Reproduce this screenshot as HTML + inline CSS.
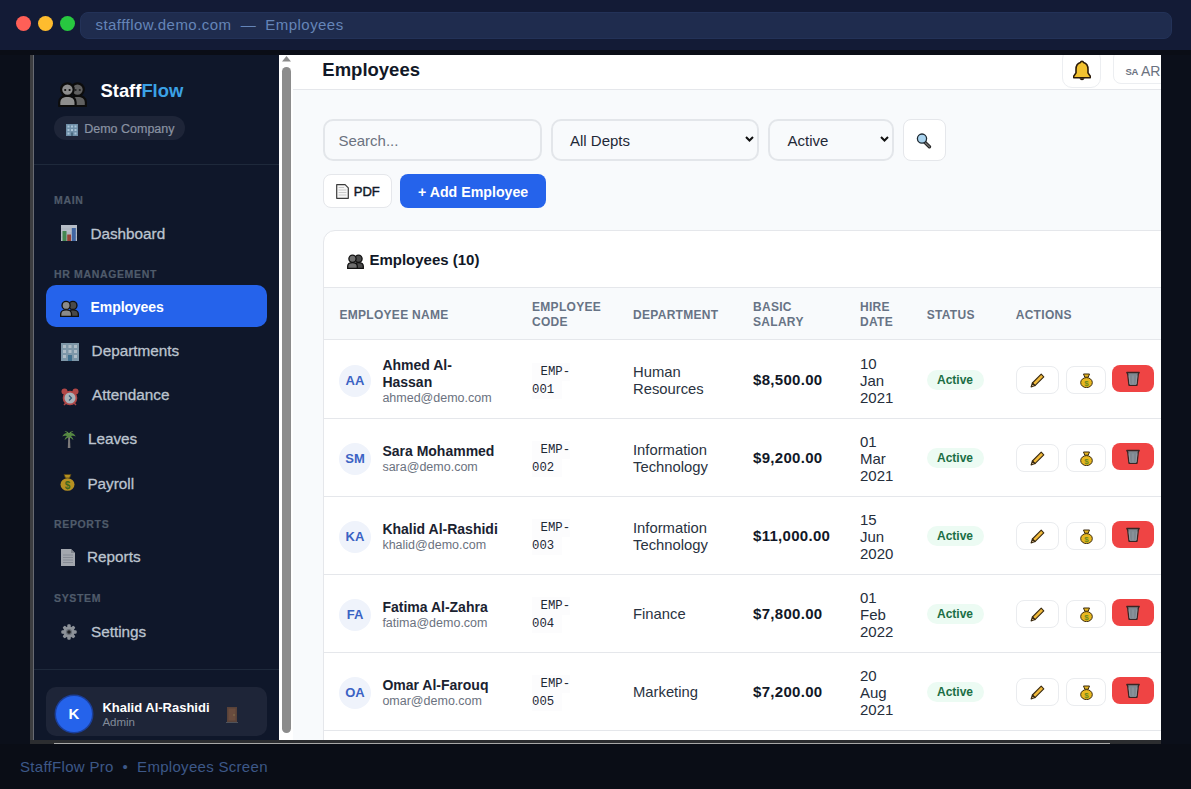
<!DOCTYPE html>
<html><head><meta charset="utf-8">
<style>
*{box-sizing:border-box;margin:0;padding:0}
html,body{width:1191px;height:789px;overflow:hidden;background:#0a0d16;font-family:"Liberation Sans",sans-serif}
.a{position:absolute}
.t{position:absolute;white-space:nowrap;line-height:20px;height:20px}
svg{display:block;position:absolute}
#top{left:0;top:0;width:1191px;height:50px;background:#131b36}
.dot{position:absolute;top:16px;width:15px;height:15px;border-radius:50%}
#url{left:80px;top:12px;width:1092px;height:27px;border-radius:8px;background:#1f2c4e;border:1px solid #233258}
#lft{left:0;top:55px;width:30px;height:689px;background:#0b0f1a}
#vbar{left:30px;top:55px;width:4px;height:685px;background:#3c3d40}
#vbar2{left:32.5px;top:55px;width:1.5px;height:685px;background:#676a72}
#side{left:34px;top:55px;width:245px;height:685px;background:#0f172a;overflow:hidden}
#sb{left:279px;top:55px;width:14px;height:685px;background:#fff}
#main{left:293px;top:55px;width:868px;height:685px;background:#f8fafc;overflow:hidden}
#rgt{left:1161px;top:55px;width:30px;height:689px;background:#0b0f1a}
#hbar{left:30px;top:740px;width:1131px;height:4px;background:#2c2d30}
#foot{left:0;top:744px;width:1191px;height:45px;background:#0a0d16}
.lbl{position:absolute;left:20px;font-size:10.5px;font-weight:700;letter-spacing:0.65px;color:#4f5b6b;-webkit-text-stroke:0.2px #4f5b6b;line-height:14px;height:14px}
.nav{position:absolute;font-size:15.3px;color:#bcc4cf;-webkit-text-stroke:0.3px #bcc4cf;line-height:20px;height:20px;white-space:nowrap}
</style></head>
<body>
<div id="top" class="a">
  <div class="dot" style="left:16px;background:#ff5f57"></div>
  <div class="dot" style="left:38px;background:#febc2e"></div>
  <div class="dot" style="left:60px;background:#28c840"></div>
  <div id="url" class="a"></div>
  <div class="t" style="left:95.5px;top:15px;font-size:15px;letter-spacing:0.45px;color:#6585b8">staffflow.demo.com&nbsp;&nbsp;—&nbsp;&nbsp;Employees</div>
</div>
<div id="lft" class="a"></div>
<div id="vbar" class="a"></div>
<div id="vbar2" class="a"></div>
<div id="side" class="a">
  <!-- logo -->
  <svg style="left:23.5px;top:25.5px" width="29" height="26" viewBox="0 0 29 26">
    <path d="M11.5 25v-3.8c0-4 3.6-6.6 8.2-6.6s8.2 2.6 8.2 6.6V25z" fill="#606060" stroke="#0c0c0c" stroke-width="2.2" stroke-linejoin="round"/>
    <circle cx="19.5" cy="8.6" r="6.3" fill="#606060" stroke="#0c0c0c" stroke-width="2.2"/>
    <path d="M1.2 25v-3.8c0-4 3.6-6.6 8.2-6.6s8.2 2.6 8.2 6.6V25z" fill="#8e8e8e" stroke="#0c0c0c" stroke-width="2.2" stroke-linejoin="round"/>
    <circle cx="9.4" cy="8.6" r="6.3" fill="#8e8e8e" stroke="#0c0c0c" stroke-width="2.2"/>
    <circle cx="7.2" cy="9" r="1.1" fill="#111"/><circle cx="11.6" cy="9" r="1.1" fill="#111"/>
    <circle cx="17.6" cy="9" r="1.1" fill="#222"/><circle cx="21.8" cy="9" r="1.1" fill="#222"/>
  </svg>
  <div class="t" style="left:66.5px;top:25.5px;font-size:18.4px;font-weight:700;color:#fff;line-height:20px">Staff<span style="color:#3ba2e6">Flow</span></div>
  <div class="a" style="left:20px;top:61px;width:131px;height:24px;border-radius:12px;background:#1e2538"></div>
  <svg style="left:32px;top:69px" width="12" height="12" viewBox="0 0 12 12">
    <rect x="0" y="0" width="12" height="12" fill="#6f8fa8"/>
    <g fill="#a9c4d6"><rect x="1.5" y="1.5" width="2" height="2"/><rect x="5" y="1.5" width="2" height="2"/><rect x="8.5" y="1.5" width="2" height="2"/>
    <rect x="1.5" y="5" width="2" height="2"/><rect x="5" y="5" width="2" height="2"/><rect x="8.5" y="5" width="2" height="2"/>
    <rect x="1.5" y="8.5" width="2" height="2"/><rect x="8.5" y="8.5" width="2" height="2"/></g>
    <rect x="5" y="8.5" width="2" height="3.5" fill="#4a6a80"/>
  </svg>
  <div class="t" style="left:50.2px;top:63.8px;font-size:12.5px;color:#8a93a3;-webkit-text-stroke:0.2px #8a93a3">Demo Company</div>
  <div class="a" style="left:0;top:109px;width:245px;height:1px;background:#1e293b"></div>

  <div class="lbl" style="top:138.2px">MAIN</div>
  <svg style="left:27px;top:170px" opacity=".85" width="16" height="16" viewBox="0 0 16 16">
    <rect x="0" y="0" width="16" height="16" fill="#d4dbe3"/>
    <g stroke="#b8c2cc" stroke-width=".6"><path d="M0 4h16M0 8h16M0 12h16"/></g>
    <rect x="1.5" y="6" width="4" height="10" fill="#4e9a58"/><rect x="6.2" y="9.5" width="3.8" height="6.5" fill="#b04a3a"/><rect x="10.8" y="3" width="4" height="13" fill="#4a74b8"/>
  </svg>
  <div class="nav" style="left:56.4px;top:169.0px">Dashboard</div>

  <div class="lbl" style="top:212.1px">HR MANAGEMENT</div>
  <div class="a" style="left:12px;top:230px;width:221px;height:42px;border-radius:10px;background:#2563eb"></div>
  <svg style="left:26px;top:244.5px" width="19" height="17" viewBox="0 0 28 25">
    <circle cx="19" cy="8" r="6" fill="#4a4a4a" stroke="#111" stroke-width="2"/>
    <path d="M11 24v-3.5c0-3.6 3.6-6 8-6s8 2.4 8 6V24z" fill="#4a4a4a" stroke="#111" stroke-width="2"/>
    <circle cx="9" cy="8" r="6" fill="#8a8a8a" stroke="#111" stroke-width="2"/>
    <path d="M1 24v-3.5c0-3.6 3.6-6 8-6s8 2.4 8 6V24z" fill="#8a8a8a" stroke="#111" stroke-width="2"/>
  </svg>
  <div class="nav" style="left:56.6px;top:242.0px;color:#fff;-webkit-text-stroke:0px;font-weight:700;font-size:14px;letter-spacing:-0.1px">Employees</div>

  <svg style="left:27px;top:288px" opacity=".8" width="18" height="18" viewBox="0 0 18 18">
    <rect x="0" y="0" width="18" height="18" fill="#9ab8c8"/>
    <g fill="#d7e6ee"><rect x="2" y="2" width="3" height="3"/><rect x="7.5" y="2" width="3" height="3"/><rect x="13" y="2" width="3" height="3"/>
    <rect x="2" y="7" width="3" height="3"/><rect x="7.5" y="7" width="3" height="3"/><rect x="13" y="7" width="3" height="3"/>
    <rect x="2" y="12" width="3" height="3"/><rect x="13" y="12" width="3" height="3"/></g>
    <rect x="7" y="12" width="4" height="6" fill="#4e87a8"/>
  </svg>
  <div class="nav" style="left:57.6px;top:286.0px">Departments</div>

  <svg style="left:27px;top:332.5px" opacity=".8" width="18" height="18" viewBox="0 0 18 18">
    <circle cx="3.5" cy="3.5" r="3" fill="#d9534f"/><circle cx="14.5" cy="3.5" r="3" fill="#d9534f"/>
    <circle cx="9" cy="10" r="7.3" fill="#d9534f"/><circle cx="9" cy="10" r="5.5" fill="#cfd8dc"/>
    <path d="M8 7.5l2.5 2.5-2.5 2.5" stroke="#3a6a8a" stroke-width="1.2" fill="none"/>
    <path d="M3 17l2-2M15 17l-2-2" stroke="#d9534f" stroke-width="1.5"/>
  </svg>
  <div class="nav" style="left:58.1px;top:330.4px">Attendance</div>

  <svg style="left:28px;top:375px" width="14" height="18" viewBox="0 0 14 18" opacity=".78">
    <path d="M6.3 6h1.6l.5 12H5.8z" fill="#9a9590"/>
    <path d="M7 3.2C4 2.2 1.2 3.6.3 6.6 1.8 5.6 3.6 5.5 5 6.2 3.6 7.2 2.8 8.6 2.6 10 4 8.8 5.6 7.6 7 7.2 8.4 7.6 10 8.8 11.4 10 11.2 8.6 10.4 7.2 9 6.2 10.4 5.5 12.2 5.6 13.7 6.6 12.8 3.6 10 2.2 7 3.2z" fill="#6aa84a"/>
    <path d="M7 3.4C6 1.8 4.2 1 2.6 1.4 4.4 2 5.8 3 7 4.6 8.2 3 9.6 2 11.4 1.4 9.8 1 8 1.8 7 3.4z" fill="#7fbf55"/>
  </svg>
  <div class="nav" style="left:53.9px;top:374.4px">Leaves</div>

  <svg style="left:26px;top:417.5px" opacity=".8" width="15" height="18" viewBox="0 0 15 18">
    <path d="M4 1.5h7l-1.5 3.5h-4z" fill="#e0b020" stroke="#6a5010" stroke-width=".8"/>
    <ellipse cx="7.5" cy="11.5" rx="7" ry="6.3" fill="#e0b020"/>
    <text x="7.5" y="15.5" font-size="10" font-family="Liberation Sans" font-weight="700" text-anchor="middle" fill="#4a7a20">$</text>
  </svg>
  <div class="nav" style="left:53.4px;top:419.0px">Payroll</div>

  <div class="lbl" style="top:462.0px">REPORTS</div>
  <svg style="left:27px;top:494px" opacity=".8" width="14" height="17" viewBox="0 0 14 17">
    <path d="M0 0h10l4 4v13H0z" fill="#c9ccd0"/><path d="M10 0v4h4" fill="#9a9ea4"/>
    <g stroke="#9aa0a6" stroke-width=".8"><path d="M2 6h10M2 8.5h10M2 11h10M2 13.5h10"/></g>
  </svg>
  <div class="nav" style="left:53.0px;top:492.0px">Reports</div>

  <div class="lbl" style="top:536.0px">SYSTEM</div>
  <svg style="left:27px;top:568.5px" opacity=".85" width="16" height="16" viewBox="0 0 16 16">
    <g fill="#a3a8ad"><circle cx="8" cy="8" r="5.6"/>
    <g id="tt"><rect x="6.3" y=".3" width="3.4" height="4" rx="1.2"/><rect x="6.3" y="11.7" width="3.4" height="4" rx="1.2"/></g>
    <g transform="rotate(45 8 8)"><rect x="6.3" y=".3" width="3.4" height="4" rx="1.2"/><rect x="6.3" y="11.7" width="3.4" height="4" rx="1.2"/></g>
    <g transform="rotate(90 8 8)"><rect x="6.3" y=".3" width="3.4" height="4" rx="1.2"/><rect x="6.3" y="11.7" width="3.4" height="4" rx="1.2"/></g>
    <g transform="rotate(135 8 8)"><rect x="6.3" y=".3" width="3.4" height="4" rx="1.2"/><rect x="6.3" y="11.7" width="3.4" height="4" rx="1.2"/></g></g>
    <circle cx="8" cy="8" r="3" fill="#7a7f85"/><circle cx="8" cy="8" r="1.8" fill="#222"/>
  </svg>
  <div class="nav" style="left:57.0px;top:567.0px">Settings</div>

  <div class="a" style="left:0;top:614px;width:245px;height:1px;background:#1e293b"></div>
  <div class="a" style="left:12px;top:632px;width:221px;height:49px;border-radius:10px;background:#1e2538"></div>
  <div class="a" style="left:22px;top:641px;width:36px;height:36px;border-radius:50%;background:#2563eb;box-shadow:0 0 0 1.5px #1b3f9a;color:#fff;font-weight:700;font-size:15px;line-height:36px;text-align:center">K</div>
  <div class="t" style="left:68.4px;top:642.7px;font-size:13px;font-weight:700;color:#fff">Khalid Al-Rashidi</div>
  <div class="t" style="left:68.4px;top:657.3px;font-size:11.5px;color:#828b99">Admin</div>
  <svg style="left:192px;top:652px" width="12" height="16" viewBox="0 0 12 16" opacity=".55">
    <rect x="1" y="0" width="10" height="15" fill="#8a5a3a"/><rect x="2.5" y="1.5" width="7" height="12" fill="#a86c44"/>
    <rect x="0" y="15" width="12" height="1" fill="#777"/><circle cx="8" cy="8" r=".8" fill="#e0c060"/>
  </svg>

</div>
<div id="sb" class="a">
  <svg style="left:3px;top:1px" width="9" height="6" viewBox="0 0 9 6"><path d="M4.5 0L9 5.5H0z" fill="#8c8c8c"/></svg>
  <div class="a" style="left:3px;top:12px;width:9px;height:666px;border-radius:5px;background:#8c8c8c"></div>
</div>
<div id="main" class="a">
<div class="a" style="left:0;top:0;width:868px;height:35px;background:#fff;border-bottom:1px solid #e5e7eb"></div>
<div class="t" style="left:29.3px;top:5.300000000000001px;font-size:18.5px;font-weight:700;color:#111827">Employees</div>
<div class="a" style="left:769px;top:-6px;width:39px;height:39px;border:1px solid #eceef1;border-radius:10px;background:#fff"></div>
<svg style="left:780px;top:4.5px" width="18" height="21" viewBox="0 0 18 21">
<path d="M9 1.2c.9 0 1.4.6 1.5 1.3 3 .8 4.5 3.5 4.5 6.8v3.6l2.3 3.3c.5.8.1 1.6-.8 1.6H1.5c-.9 0-1.3-.8-.8-1.6L3 12.9V9.3c0-3.3 1.5-6 4.5-6.8.1-.7.6-1.3 1.5-1.3z" fill="#f2c230" stroke="#2a1a08" stroke-width="1.6" stroke-linejoin="round"/>
<path d="M6.5 18.2c.3 1.2 1.3 2 2.5 2s2.2-.8 2.5-2z" fill="#2a1a08"/>
</svg>
<div class="a" style="left:820px;top:-5px;width:80px;height:34px;border:1px solid #eceef1;border-radius:8px;background:#fff"></div>
<div class="t" style="left:832.5px;top:6.5px;font-size:9.5px;font-weight:700;color:#6b7280;letter-spacing:-0.3px">SA</div>
<div class="t" style="left:848px;top:5.6px;font-size:14px;color:#6b7280">AR</div>
<div class="a" style="left:29.5px;top:63.5px;width:219px;height:42px;border:2px solid #e3e6ea;border-radius:10px;background:#f8fafc"></div>
<div class="t" style="left:45.4px;top:76px;font-size:15px;color:#6b7280">Search...</div>
<div class="a" style="left:257.5px;top:63.5px;width:208px;height:42px;border:2px solid #e3e6ea;border-radius:10px;background:#f8fafc"></div>
<div class="t" style="left:277px;top:76px;font-size:15px;color:#1f2937">All Depts</div>
<svg style="left:451.5px;top:80.5px" width="9" height="6" viewBox="0 0 9 6"><path d="M1 1l3.5 3.5L8 1" stroke="#111" stroke-width="2" fill="none"/></svg>
<div class="a" style="left:474.5px;top:63.5px;width:126px;height:42px;border:2px solid #e3e6ea;border-radius:10px;background:#f8fafc"></div>
<div class="t" style="left:494.5px;top:76px;font-size:15px;color:#1f2937">Active</div>
<svg style="left:586.5px;top:80.5px" width="9" height="6" viewBox="0 0 9 6"><path d="M1 1l3.5 3.5L8 1" stroke="#111" stroke-width="2" fill="none"/></svg>
<div class="a" style="left:609.5px;top:63.5px;width:43px;height:42px;border:1px solid #e5e7eb;border-radius:8px;background:#fff"></div>
<svg style="left:622.5px;top:77.5px" width="16" height="16" viewBox="0 0 16 16">
<path d="M8.8 9.3l4.6 4.4" stroke="#1e1e1e" stroke-width="3.4" stroke-linecap="round"/>
<path d="M8.8 9.3l4.6 4.4" stroke="#6a6a6a" stroke-width="1.6" stroke-linecap="round"/>
<circle cx="6" cy="5.6" r="4.6" fill="#a9d3ef" stroke="#1e2a33" stroke-width="1.3"/>
</svg>
<div class="a" style="left:29.5px;top:118.5px;width:69px;height:34px;border:1px solid #e5e7eb;border-radius:8px;background:#fff"></div>
<svg style="left:43px;top:129px" width="13" height="15" viewBox="0 0 13 15">
<path d="M.7.7h8.4l3.2 3.2v10.4H.7z" fill="#f7f7f7" stroke="#3c3c3c" stroke-width="1.2" stroke-linejoin="round"/>
<g stroke="#c4c4c4" stroke-width=".9"><path d="M2.6 3.5h5.5M2.6 6h7.8M2.6 8.5h7.8M2.6 11h7.8"/></g>
</svg>
<div class="t" style="left:60.8px;top:126.5px;font-size:13px;font-weight:400;-webkit-text-stroke:0.45px #111827;color:#111827">PDF</div>
<div class="a" style="left:107px;top:118.5px;width:146px;height:34px;border-radius:8px;background:#2563eb"></div>
<div class="t" style="left:125px;top:126.5px;font-size:14.2px;font-weight:700;color:#fff">+ Add Employee</div>
<div class="a" style="left:29.5px;top:175px;width:900px;height:600px;border:1px solid #e5e7eb;border-radius:12px;background:#fff"></div>
<svg style="left:54px;top:198.5px" width="17" height="15" viewBox="0 0 28 25">
<circle cx="19" cy="8" r="6" fill="#4a4a4a" stroke="#111" stroke-width="2.2"/>
<path d="M11 24v-3.5c0-3.6 3.6-6 8-6s8 2.4 8 6V24z" fill="#4a4a4a" stroke="#111" stroke-width="2.2"/>
<circle cx="9" cy="8" r="6" fill="#6e6e6e" stroke="#111" stroke-width="2.2"/>
<path d="M1 24v-3.5c0-3.6 3.6-6 8-6s8 2.4 8 6V24z" fill="#6e6e6e" stroke="#111" stroke-width="2.2"/>
</svg>
<div class="t" style="left:76.4px;top:194.5px;font-size:15px;font-weight:700;color:#111827">Employees (10)</div>
<div class="a" style="left:30.5px;top:232px;width:900px;height:53px;background:#f8fafc;border-top:1px solid #e5e7eb;border-bottom:1px solid #e5e7eb"></div>
<div class="t" style="left:46.4px;top:249.5px;font-size:12px;font-weight:700;color:#677385;letter-spacing:0.3px">EMPLOYEE NAME</div>
<div class="a" style="left:239px;top:244.5px;line-height:15px;white-space:nowrap;font-size:12px;font-weight:700;color:#677385;letter-spacing:0.3px">EMPLOYEE<br>CODE</div>
<div class="t" style="left:340px;top:249.5px;font-size:12px;font-weight:700;color:#677385;letter-spacing:0.3px">DEPARTMENT</div>
<div class="a" style="left:460px;top:244.5px;line-height:15px;white-space:nowrap;font-size:12px;font-weight:700;color:#677385;letter-spacing:0.3px">BASIC<br>SALARY</div>
<div class="a" style="left:567px;top:244.5px;line-height:15px;white-space:nowrap;font-size:12px;font-weight:700;color:#677385;letter-spacing:0.3px">HIRE<br>DATE</div>
<div class="t" style="left:633.7px;top:249.5px;font-size:12px;font-weight:700;color:#677385;letter-spacing:0.3px">STATUS</div>
<div class="t" style="left:722.7px;top:249.5px;font-size:12px;font-weight:700;color:#677385;letter-spacing:0.3px">ACTIONS</div>
<div class="a" style="left:46px;top:309.5px;width:32px;height:32px;border-radius:50%;background:#eff3fb;color:#3b63c4;font-size:13px;font-weight:700;line-height:32px;text-align:center">AA</div>
<div class="a" style="left:89.4px;top:301.85px;line-height:17px;white-space:nowrap;font-size:14px;font-weight:700;color:#1a2230">Ahmed Al-<br>Hassan</div>
<div class="t" style="left:89.4px;top:335.85px;line-height:14.5px;height:14.5px;font-size:12.5px;color:#6b7280">ahmed@demo.com</div>
<div class="a" style="left:239px;top:308.3px;line-height:18px;font-family:'Liberation Mono',monospace;font-size:12.3px;color:#1f2937;white-space:nowrap"><span style="background:#fcfcfd;padding:2px 0 2px 8.6px">EMP-</span><br><span style="background:#fcfcfd;padding:2px 8px 2px 0">001</span></div>
<div class="a" style="left:340px;top:309.2px;line-height:17px;white-space:nowrap;font-size:14.8px;color:#2a3341">Human<br>Resources</div>
<div class="t" style="left:460px;top:315px;font-size:15px;font-weight:700;letter-spacing:0.3px;color:#111827">$8,500.00</div>
<div class="a" style="left:567px;top:299.5px;line-height:17px;white-space:nowrap;font-size:15px;color:#252e3c">10<br>Jan<br>2021</div>
<div class="a" style="left:633.5px;top:314.5px;width:57px;height:20px;border-radius:10px;background:#ecfbf3;color:#1b6e45;font-size:12px;font-weight:700;line-height:20px;text-align:center">Active</div>
<div class="a" style="left:722.5px;top:310.5px;width:43px;height:28px;border:1px solid #eaecef;border-radius:8px;background:#fff"></div>
<svg style="left:736.5px;top:318px" width="15" height="15" viewBox="0 0 15 15">
<path d="M11.2 1.2l2.6 2.6-8.8 8.8-2.6-2.6z" fill="#f0b93a" stroke="#3a2a10" stroke-width="1.1" stroke-linejoin="round"/>
<path d="M2.4 10l2.6 2.6-3.9 1.3z" fill="#e8c89a" stroke="#3a2a10" stroke-width="1.1" stroke-linejoin="round"/>
<path d="M1.1 13.9l.9-.3-.6-.6z" fill="#3a2a10"/>
</svg>
<div class="a" style="left:772.5px;top:310.5px;width:40px;height:28px;border:1px solid #eaecef;border-radius:8px;background:#fff"></div>
<svg style="left:786.5px;top:318px" width="13" height="15" viewBox="0 0 13 15">
<path d="M3.5 1h6l-1.3 3.2H4.8z" fill="#e8b820" stroke="#3a2a10" stroke-width="1"/>
<ellipse cx="6.5" cy="9.6" rx="5.8" ry="5" fill="#e8b820" stroke="#3a2a10" stroke-width="1"/>
<text x="6.5" y="13" font-size="8" font-family="Liberation Sans" font-weight="700" text-anchor="middle" fill="#6a8a20">$</text>
</svg>
<div class="a" style="left:819px;top:310px;width:42px;height:27px;border-radius:8px;background:#ef4444"></div>
<svg style="left:833px;top:316px" width="14" height="15" viewBox="0 0 14 15">
<path d="M.8 1.5h12.4l-.9 1.6-1.2 10.6c-.1.6-.5 1-1 1H3.9c-.5 0-.9-.4-1-1L1.7 3.1z" fill="#7e8890" stroke="#3a2422" stroke-width="1.3" stroke-linejoin="round"/>
<path d="M3 4.5l.9 8.5M7 4.5v8.5M11 4.5l-.9 8.5" stroke="#9aa4ac" stroke-width=".7"/>
</svg>
<div class="a" style="left:30.5px;top:363px;width:900px;height:1px;background:#e5e7eb"></div>
<div class="a" style="left:46px;top:387.5px;width:32px;height:32px;border-radius:50%;background:#eff3fb;color:#3b63c4;font-size:13px;font-weight:700;line-height:32px;text-align:center">SM</div>
<div class="a" style="left:89.4px;top:388.35px;line-height:17px;white-space:nowrap;font-size:14px;font-weight:700;color:#1a2230">Sara Mohammed</div>
<div class="t" style="left:89.4px;top:405.35px;line-height:14.5px;height:14.5px;font-size:12.5px;color:#6b7280">sara@demo.com</div>
<div class="a" style="left:239px;top:386.3px;line-height:18px;font-family:'Liberation Mono',monospace;font-size:12.3px;color:#1f2937;white-space:nowrap"><span style="background:#fcfcfd;padding:2px 0 2px 8.6px">EMP-</span><br><span style="background:#fcfcfd;padding:2px 8px 2px 0">002</span></div>
<div class="a" style="left:340px;top:387.2px;line-height:17px;white-space:nowrap;font-size:14.8px;color:#2a3341">Information<br>Technology</div>
<div class="t" style="left:460px;top:393px;font-size:15px;font-weight:700;letter-spacing:0.3px;color:#111827">$9,200.00</div>
<div class="a" style="left:567px;top:377.5px;line-height:17px;white-space:nowrap;font-size:15px;color:#252e3c">01<br>Mar<br>2021</div>
<div class="a" style="left:633.5px;top:392.5px;width:57px;height:20px;border-radius:10px;background:#ecfbf3;color:#1b6e45;font-size:12px;font-weight:700;line-height:20px;text-align:center">Active</div>
<div class="a" style="left:722.5px;top:388.5px;width:43px;height:28px;border:1px solid #eaecef;border-radius:8px;background:#fff"></div>
<svg style="left:736.5px;top:396px" width="15" height="15" viewBox="0 0 15 15">
<path d="M11.2 1.2l2.6 2.6-8.8 8.8-2.6-2.6z" fill="#f0b93a" stroke="#3a2a10" stroke-width="1.1" stroke-linejoin="round"/>
<path d="M2.4 10l2.6 2.6-3.9 1.3z" fill="#e8c89a" stroke="#3a2a10" stroke-width="1.1" stroke-linejoin="round"/>
<path d="M1.1 13.9l.9-.3-.6-.6z" fill="#3a2a10"/>
</svg>
<div class="a" style="left:772.5px;top:388.5px;width:40px;height:28px;border:1px solid #eaecef;border-radius:8px;background:#fff"></div>
<svg style="left:786.5px;top:396px" width="13" height="15" viewBox="0 0 13 15">
<path d="M3.5 1h6l-1.3 3.2H4.8z" fill="#e8b820" stroke="#3a2a10" stroke-width="1"/>
<ellipse cx="6.5" cy="9.6" rx="5.8" ry="5" fill="#e8b820" stroke="#3a2a10" stroke-width="1"/>
<text x="6.5" y="13" font-size="8" font-family="Liberation Sans" font-weight="700" text-anchor="middle" fill="#6a8a20">$</text>
</svg>
<div class="a" style="left:819px;top:388px;width:42px;height:27px;border-radius:8px;background:#ef4444"></div>
<svg style="left:833px;top:394px" width="14" height="15" viewBox="0 0 14 15">
<path d="M.8 1.5h12.4l-.9 1.6-1.2 10.6c-.1.6-.5 1-1 1H3.9c-.5 0-.9-.4-1-1L1.7 3.1z" fill="#7e8890" stroke="#3a2422" stroke-width="1.3" stroke-linejoin="round"/>
<path d="M3 4.5l.9 8.5M7 4.5v8.5M11 4.5l-.9 8.5" stroke="#9aa4ac" stroke-width=".7"/>
</svg>
<div class="a" style="left:30.5px;top:441px;width:900px;height:1px;background:#e5e7eb"></div>
<div class="a" style="left:46px;top:465.5px;width:32px;height:32px;border-radius:50%;background:#eff3fb;color:#3b63c4;font-size:13px;font-weight:700;line-height:32px;text-align:center">KA</div>
<div class="a" style="left:89.4px;top:466.35px;line-height:17px;white-space:nowrap;font-size:14px;font-weight:700;color:#1a2230">Khalid Al-Rashidi</div>
<div class="t" style="left:89.4px;top:483.35px;line-height:14.5px;height:14.5px;font-size:12.5px;color:#6b7280">khalid@demo.com</div>
<div class="a" style="left:239px;top:464.3px;line-height:18px;font-family:'Liberation Mono',monospace;font-size:12.3px;color:#1f2937;white-space:nowrap"><span style="background:#fcfcfd;padding:2px 0 2px 8.6px">EMP-</span><br><span style="background:#fcfcfd;padding:2px 8px 2px 0">003</span></div>
<div class="a" style="left:340px;top:465.2px;line-height:17px;white-space:nowrap;font-size:14.8px;color:#2a3341">Information<br>Technology</div>
<div class="t" style="left:460px;top:471px;font-size:15px;font-weight:700;letter-spacing:0.3px;color:#111827">$11,000.00</div>
<div class="a" style="left:567px;top:455.5px;line-height:17px;white-space:nowrap;font-size:15px;color:#252e3c">15<br>Jun<br>2020</div>
<div class="a" style="left:633.5px;top:470.5px;width:57px;height:20px;border-radius:10px;background:#ecfbf3;color:#1b6e45;font-size:12px;font-weight:700;line-height:20px;text-align:center">Active</div>
<div class="a" style="left:722.5px;top:466.5px;width:43px;height:28px;border:1px solid #eaecef;border-radius:8px;background:#fff"></div>
<svg style="left:736.5px;top:474px" width="15" height="15" viewBox="0 0 15 15">
<path d="M11.2 1.2l2.6 2.6-8.8 8.8-2.6-2.6z" fill="#f0b93a" stroke="#3a2a10" stroke-width="1.1" stroke-linejoin="round"/>
<path d="M2.4 10l2.6 2.6-3.9 1.3z" fill="#e8c89a" stroke="#3a2a10" stroke-width="1.1" stroke-linejoin="round"/>
<path d="M1.1 13.9l.9-.3-.6-.6z" fill="#3a2a10"/>
</svg>
<div class="a" style="left:772.5px;top:466.5px;width:40px;height:28px;border:1px solid #eaecef;border-radius:8px;background:#fff"></div>
<svg style="left:786.5px;top:474px" width="13" height="15" viewBox="0 0 13 15">
<path d="M3.5 1h6l-1.3 3.2H4.8z" fill="#e8b820" stroke="#3a2a10" stroke-width="1"/>
<ellipse cx="6.5" cy="9.6" rx="5.8" ry="5" fill="#e8b820" stroke="#3a2a10" stroke-width="1"/>
<text x="6.5" y="13" font-size="8" font-family="Liberation Sans" font-weight="700" text-anchor="middle" fill="#6a8a20">$</text>
</svg>
<div class="a" style="left:819px;top:466px;width:42px;height:27px;border-radius:8px;background:#ef4444"></div>
<svg style="left:833px;top:472px" width="14" height="15" viewBox="0 0 14 15">
<path d="M.8 1.5h12.4l-.9 1.6-1.2 10.6c-.1.6-.5 1-1 1H3.9c-.5 0-.9-.4-1-1L1.7 3.1z" fill="#7e8890" stroke="#3a2422" stroke-width="1.3" stroke-linejoin="round"/>
<path d="M3 4.5l.9 8.5M7 4.5v8.5M11 4.5l-.9 8.5" stroke="#9aa4ac" stroke-width=".7"/>
</svg>
<div class="a" style="left:30.5px;top:519px;width:900px;height:1px;background:#e5e7eb"></div>
<div class="a" style="left:46px;top:543.5px;width:32px;height:32px;border-radius:50%;background:#eff3fb;color:#3b63c4;font-size:13px;font-weight:700;line-height:32px;text-align:center">FA</div>
<div class="a" style="left:89.4px;top:544.35px;line-height:17px;white-space:nowrap;font-size:14px;font-weight:700;color:#1a2230">Fatima Al-Zahra</div>
<div class="t" style="left:89.4px;top:561.35px;line-height:14.5px;height:14.5px;font-size:12.5px;color:#6b7280">fatima@demo.com</div>
<div class="a" style="left:239px;top:542.3px;line-height:18px;font-family:'Liberation Mono',monospace;font-size:12.3px;color:#1f2937;white-space:nowrap"><span style="background:#fcfcfd;padding:2px 0 2px 8.6px">EMP-</span><br><span style="background:#fcfcfd;padding:2px 8px 2px 0">004</span></div>
<div class="a" style="left:340px;top:550.5px;line-height:17px;white-space:nowrap;font-size:14.8px;color:#2a3341">Finance</div>
<div class="t" style="left:460px;top:549px;font-size:15px;font-weight:700;letter-spacing:0.3px;color:#111827">$7,800.00</div>
<div class="a" style="left:567px;top:533.5px;line-height:17px;white-space:nowrap;font-size:15px;color:#252e3c">01<br>Feb<br>2022</div>
<div class="a" style="left:633.5px;top:548.5px;width:57px;height:20px;border-radius:10px;background:#ecfbf3;color:#1b6e45;font-size:12px;font-weight:700;line-height:20px;text-align:center">Active</div>
<div class="a" style="left:722.5px;top:544.5px;width:43px;height:28px;border:1px solid #eaecef;border-radius:8px;background:#fff"></div>
<svg style="left:736.5px;top:552px" width="15" height="15" viewBox="0 0 15 15">
<path d="M11.2 1.2l2.6 2.6-8.8 8.8-2.6-2.6z" fill="#f0b93a" stroke="#3a2a10" stroke-width="1.1" stroke-linejoin="round"/>
<path d="M2.4 10l2.6 2.6-3.9 1.3z" fill="#e8c89a" stroke="#3a2a10" stroke-width="1.1" stroke-linejoin="round"/>
<path d="M1.1 13.9l.9-.3-.6-.6z" fill="#3a2a10"/>
</svg>
<div class="a" style="left:772.5px;top:544.5px;width:40px;height:28px;border:1px solid #eaecef;border-radius:8px;background:#fff"></div>
<svg style="left:786.5px;top:552px" width="13" height="15" viewBox="0 0 13 15">
<path d="M3.5 1h6l-1.3 3.2H4.8z" fill="#e8b820" stroke="#3a2a10" stroke-width="1"/>
<ellipse cx="6.5" cy="9.6" rx="5.8" ry="5" fill="#e8b820" stroke="#3a2a10" stroke-width="1"/>
<text x="6.5" y="13" font-size="8" font-family="Liberation Sans" font-weight="700" text-anchor="middle" fill="#6a8a20">$</text>
</svg>
<div class="a" style="left:819px;top:544px;width:42px;height:27px;border-radius:8px;background:#ef4444"></div>
<svg style="left:833px;top:550px" width="14" height="15" viewBox="0 0 14 15">
<path d="M.8 1.5h12.4l-.9 1.6-1.2 10.6c-.1.6-.5 1-1 1H3.9c-.5 0-.9-.4-1-1L1.7 3.1z" fill="#7e8890" stroke="#3a2422" stroke-width="1.3" stroke-linejoin="round"/>
<path d="M3 4.5l.9 8.5M7 4.5v8.5M11 4.5l-.9 8.5" stroke="#9aa4ac" stroke-width=".7"/>
</svg>
<div class="a" style="left:30.5px;top:597px;width:900px;height:1px;background:#e5e7eb"></div>
<div class="a" style="left:46px;top:621.5px;width:32px;height:32px;border-radius:50%;background:#eff3fb;color:#3b63c4;font-size:13px;font-weight:700;line-height:32px;text-align:center">OA</div>
<div class="a" style="left:89.4px;top:622.35px;line-height:17px;white-space:nowrap;font-size:14px;font-weight:700;color:#1a2230">Omar Al-Farouq</div>
<div class="t" style="left:89.4px;top:639.35px;line-height:14.5px;height:14.5px;font-size:12.5px;color:#6b7280">omar@demo.com</div>
<div class="a" style="left:239px;top:620.3px;line-height:18px;font-family:'Liberation Mono',monospace;font-size:12.3px;color:#1f2937;white-space:nowrap"><span style="background:#fcfcfd;padding:2px 0 2px 8.6px">EMP-</span><br><span style="background:#fcfcfd;padding:2px 8px 2px 0">005</span></div>
<div class="a" style="left:340px;top:628.5px;line-height:17px;white-space:nowrap;font-size:14.8px;color:#2a3341">Marketing</div>
<div class="t" style="left:460px;top:627px;font-size:15px;font-weight:700;letter-spacing:0.3px;color:#111827">$7,200.00</div>
<div class="a" style="left:567px;top:611.5px;line-height:17px;white-space:nowrap;font-size:15px;color:#252e3c">20<br>Aug<br>2021</div>
<div class="a" style="left:633.5px;top:626.5px;width:57px;height:20px;border-radius:10px;background:#ecfbf3;color:#1b6e45;font-size:12px;font-weight:700;line-height:20px;text-align:center">Active</div>
<div class="a" style="left:722.5px;top:622.5px;width:43px;height:28px;border:1px solid #eaecef;border-radius:8px;background:#fff"></div>
<svg style="left:736.5px;top:630px" width="15" height="15" viewBox="0 0 15 15">
<path d="M11.2 1.2l2.6 2.6-8.8 8.8-2.6-2.6z" fill="#f0b93a" stroke="#3a2a10" stroke-width="1.1" stroke-linejoin="round"/>
<path d="M2.4 10l2.6 2.6-3.9 1.3z" fill="#e8c89a" stroke="#3a2a10" stroke-width="1.1" stroke-linejoin="round"/>
<path d="M1.1 13.9l.9-.3-.6-.6z" fill="#3a2a10"/>
</svg>
<div class="a" style="left:772.5px;top:622.5px;width:40px;height:28px;border:1px solid #eaecef;border-radius:8px;background:#fff"></div>
<svg style="left:786.5px;top:630px" width="13" height="15" viewBox="0 0 13 15">
<path d="M3.5 1h6l-1.3 3.2H4.8z" fill="#e8b820" stroke="#3a2a10" stroke-width="1"/>
<ellipse cx="6.5" cy="9.6" rx="5.8" ry="5" fill="#e8b820" stroke="#3a2a10" stroke-width="1"/>
<text x="6.5" y="13" font-size="8" font-family="Liberation Sans" font-weight="700" text-anchor="middle" fill="#6a8a20">$</text>
</svg>
<div class="a" style="left:819px;top:622px;width:42px;height:27px;border-radius:8px;background:#ef4444"></div>
<svg style="left:833px;top:628px" width="14" height="15" viewBox="0 0 14 15">
<path d="M.8 1.5h12.4l-.9 1.6-1.2 10.6c-.1.6-.5 1-1 1H3.9c-.5 0-.9-.4-1-1L1.7 3.1z" fill="#7e8890" stroke="#3a2422" stroke-width="1.3" stroke-linejoin="round"/>
<path d="M3 4.5l.9 8.5M7 4.5v8.5M11 4.5l-.9 8.5" stroke="#9aa4ac" stroke-width=".7"/>
</svg>
<div class="a" style="left:30.5px;top:675px;width:900px;height:1px;background:#e5e7eb"></div>
</div>
<div id="rgt" class="a"></div>
<div id="hbar" class="a"></div>
<div class="a" style="left:54px;top:742.5px;width:1056px;height:1.5px;background:#a8a8a8"></div>
<div id="foot" class="a">
  <div class="t" style="left:20px;top:13px;font-size:15px;letter-spacing:0.3px;color:#3d5888">StaffFlow Pro&nbsp;&nbsp;•&nbsp;&nbsp;Employees Screen</div>
</div>
</body></html>
